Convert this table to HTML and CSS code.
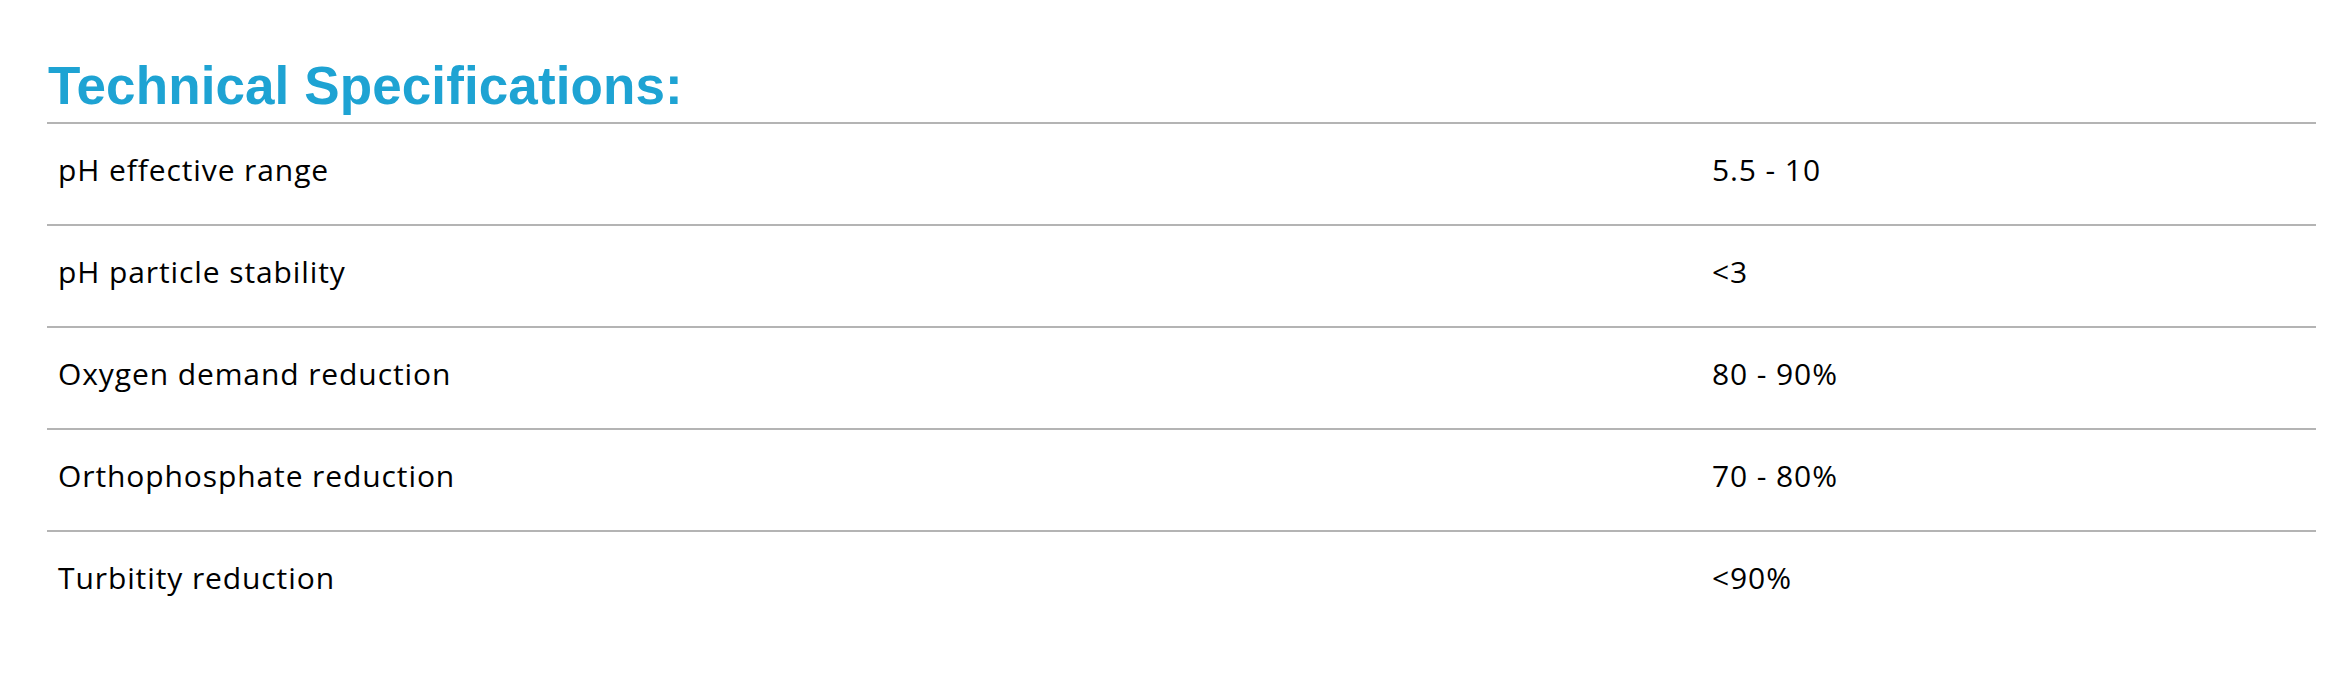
FILE: index.html
```html
<!DOCTYPE html>
<html lang="en">
<head>
<meta charset="utf-8">
<title>Technical Specifications</title>
<link rel="stylesheet" href="styles.css">
</head>
<body>
<section class="specs">
  <h2 class="specs-title">Technical Specifications:</h2>
  <div class="specs-table">
    <div class="spec-row">
      <div class="spec-name">pH effective range</div>
      <div class="spec-value">5.5 - 10</div>
    </div>
    <div class="spec-row">
      <div class="spec-name">pH particle stability</div>
      <div class="spec-value">&lt;3</div>
    </div>
    <div class="spec-row">
      <div class="spec-name">Oxygen demand reduction</div>
      <div class="spec-value">80 - 90%</div>
    </div>
    <div class="spec-row">
      <div class="spec-name">Orthophosphate reduction</div>
      <div class="spec-value">70 - 80%</div>
    </div>
    <div class="spec-row">
      <div class="spec-name">Turbitity reduction</div>
      <div class="spec-value">&lt;90%</div>
    </div>
  </div>
</section>
</body>
</html>
```
FILE: styles.css
```css
html, body {
  margin: 0;
  padding: 0;
  background: #ffffff;
}

.specs {
  padding: 56px 0 0 47px;
  width: 2269px;
}

.specs-title {
  margin: 0 0 6px 1px;
  font-family: "Liberation Sans", Arial, sans-serif;
  font-weight: 700;
  font-size: 53px;
  line-height: 60px;
  color: #1ea3d3;
  letter-spacing: 0.1px;
}

.specs-table {
  display: flex;
  flex-direction: column;
}

.spec-row {
  display: grid;
  grid-template-columns: 1665px 1fr;
  border-top: 2px solid #b4b4b4;
  padding: 26px 0 34px 0;
  font-family: "Open Sans", sans-serif;
  font-weight: 400;
  font-size: 30px;
  line-height: 40px;
  color: #000000;
  letter-spacing: 0.9px;
}

.spec-name {
  padding-left: 11px;
}

.spec-value {
  padding-left: 0;
}
```
